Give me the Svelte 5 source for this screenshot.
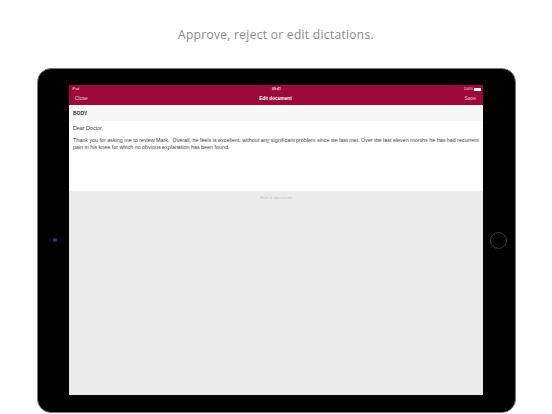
<script lang="ts">
  // Approve / reject / edit screen shown inside a tablet frame
  const title = 'Approve, reject or edit dictations.'
  const greeting = 'Dear Doctor,'
  const bodyText =
    'Thank you for asking me to review Mark.  Overall, he feels is excellent, without any significant problem since we last met. Over the last eleven months he has had recurrent pain in his knee for which no obvious explanation has been found.'
</script>

<div class="page">
  <h1 class="headline">{title}</h1>

  <div class="tablet">
    <div class="bezel-side left">
      <span class="camera"></span>
    </div>

    <div class="screen">
      <div class="app-bar">
        <div class="status">
          <span class="carrier">iPad</span>
          <span class="clock">09:41</span>
          <span class="power">
            100%
            <span class="battery"></span>
          </span>
        </div>
        <div class="nav">
          <span class="nav-btn">Close</span>
          <span class="nav-title">Edit document</span>
          <span class="nav-btn save">Save</span>
        </div>
      </div>

      <div class="section-head">BODY</div>

      <div class="doc">
        <p>{greeting}</p>
        <p>{bodyText}</p>
      </div>

      <div class="rest">
        <span class="end-note">End of document</span>
      </div>
    </div>

    <div class="bezel-side right">
      <span class="home"></span>
    </div>
  </div>
</div>

<style>
  :global(body) {
    margin: 0;
    background: #ffffff;
  }

  .page {
    width: 552px;
    height: 414px;
    overflow: hidden;
    display: flex;
    flex-direction: column;
    font-family: 'Liberation Sans', Arial, sans-serif;
  }

  .headline {
    margin: 0;
    height: 68px;
    box-sizing: border-box;
    padding-top: 26px;
    text-align: center;
    font-family: 'Open Sans', sans-serif;
    font-size: 12px;
    line-height: 18px;
    font-weight: 400;
    letter-spacing: 0.3px;
    color: #8a8a8a;
  }

  .tablet {
    flex: none;
    width: 479px;
    height: 345px;
    margin-left: 37px;
    box-sizing: border-box;
    display: flex;
    padding: 16px 0 17px;
    background: #000000;
    border: 1px solid #7a7a7a;
    border-radius: 14px;
  }

  .bezel-side {
    flex: 1;
    display: flex;
    align-items: center;
    justify-content: center;
  }

  .bezel-side.left {
    flex: none;
    width: 31px;
    padding-left: 3px;
    box-sizing: border-box;
  }

  .bezel-side.right {
    padding-right: 1px;
  }

  .camera {
    width: 4px;
    height: 4px;
    border-radius: 50%;
    background: #2b3a78;
  }

  .home {
    width: 15px;
    height: 15px;
    border: 1px solid #3c3c3c;
    border-radius: 50%;
  }

  .screen {
    flex: none;
    width: 414px;
    display: flex;
    flex-direction: column;
    background: #ececec;
  }

  .app-bar {
    background: #9b0a3a;
    color: #ffffff;
  }

  .status {
    height: 8px;
    display: grid;
    grid-template-columns: 1fr auto 1fr;
    align-items: center;
    padding: 0 2px 0 3px;
    font-size: 3.6px;
    color: #f3d9e2;
  }

  .clock {
    font-weight: 700;
  }

  .power {
    display: flex;
    justify-content: flex-end;
    align-items: center;
    gap: 1px;
  }

  .battery {
    width: 7px;
    height: 3px;
    background: #ffffff;
  }

  .nav {
    height: 10px;
    display: grid;
    grid-template-columns: 1fr auto 1fr;
    align-items: center;
    padding: 0 7px 2px 6px;
    font-size: 5px;
  }

  .nav-btn {
    color: #f0cdd9;
  }

  .save {
    text-align: right;
  }

  .nav-title {
    font-size: 4.7px;
    font-weight: 700;
  }

  .section-head {
    height: 16px;
    display: flex;
    align-items: center;
    padding: 0 4px;
    background: #f7f7f7;
    font-size: 5px;
    font-weight: 700;
    color: #333333;
  }

  .doc {
    height: 70px;
    box-sizing: border-box;
    padding: 4px 3px 0 4px;
    background: #ffffff;
    font-size: 5.37px;
    line-height: 6.4px;
    color: #444444;
  }

  .doc p {
    margin: 0 0 6px;
    white-space: pre-wrap;
  }

  .rest {
    flex: 1;
    display: flex;
    justify-content: center;
    padding-top: 4px;
  }

  .end-note {
    font-size: 4.2px;
    color: #c4c4c4;
  }
</style>
